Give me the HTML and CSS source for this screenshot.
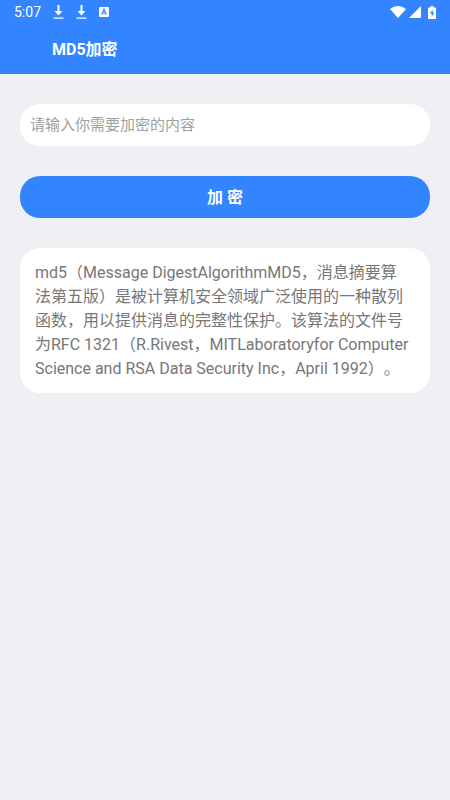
FILE: index.html
```html
<!DOCTYPE html>
<html lang="zh-CN">
<head>
    <meta charset="UTF-8">
    <meta name="viewport" content="width=device-width, initial-scale=1.0">
    <title>MD5加密</title>
    <link rel="stylesheet" href="styles.css">
</head>
<body>
    <header class="header">
        <div class="status-bar">
            <span class="time">5:07</span>
            <div class="status-left">
                <svg class="icon" width="11" height="14" viewBox="0 0 11 14"><path d="M4.500 0h2v6h3l-4 4.500-4-4.500h3zM.5 12.500h10v1.200H.5z"/></svg>
                <svg class="icon" width="11" height="14" viewBox="0 0 11 14"><path d="M4.500 0h2v6h3l-4 4.500-4-4.500h3zM.5 12.500h10v1.200H.5z"/></svg>
                <svg class="icon" width="10" height="10" viewBox="0 0 10 10"><rect width="10" height="10" rx="1"/><path d="M2.700 7.500 5 2.200 7.300 7.500M3.500 6h3" fill="none" stroke="#3285ff" stroke-width="1.200"/></svg>
            </div>
            <div class="status-right">
                <svg class="icon" width="16" height="12" viewBox="0 0 16 12"><path d="M0 3Q8-3 16 3L8 12z"/></svg>
                <svg class="icon" width="12" height="12" viewBox="0 0 12 12"><path d="M12 0v12H0z"/></svg>
                <svg class="icon battery" width="8" height="13" viewBox="0 0 8 13"><path d="M2.500 0h3v1.500H7.500L8 2v10.500l-.5.500h-7L0 12.500V2l.5-.5h2z"/><path d="M4.700 3.500 2 7.500h1.700v3.500L6.200 6.500H4.700z" fill="#3285ff"/></svg>
            </div>
        </div>
        <h1 class="title">MD5加密</h1>
    </header>
    <main class="content">
        <input class="text-input" type="text" id="source" placeholder="请输入你需要加密的内容" aria-label="请输入你需要加密的内容">
        <button class="encrypt-button" type="button">加 密</button>
        <p class="card">md5（Message DigestAlgorithmMD5，消息摘要算法第五版）是被计算机安全领域广泛使用的一种散列函数，用以提供消息的完整性保护。该算法的文件号为RFC 1321（R.Rivest，MITLaboratoryfor Computer Science and RSA Data Security Inc，April 1992）。</p>
    </main>
</body>
</html>
```

FILE: styles.css
```css
* {
    box-sizing: border-box;
}
body {
    margin: 0;
    min-height: 100vh;
    background-color: #efeff4;
    font-family: Roboto, "Noto Sans CJK SC", sans-serif;
}
.header {
    background-color: #3285ff;
    color: white;
}
.status-bar {
    display: flex;
    align-items: center;
    gap: 12px;
    height: 24px;
    padding: 0 14px;
}
.time {
    font-size: 14px;
}
.icon {
    fill: white;
}
.status-left {
    display: flex;
    align-items: center;
    gap: 12px;
}
.status-right {
    display: flex;
    align-items: center;
    gap: 3px;
    margin-left: auto;
}
.battery {
    margin-left: 4px;
}
.title {
    margin: 0;
    padding: 1px 0 0 52px;
    font-size: 16px;
    font-weight: 700;
    line-height: 49px;
}
.content {
    display: flex;
    flex-direction: column;
    gap: 30px;
    padding: 30px 20px;
}
.text-input {
    height: 42px;
    padding: 0 10px;
    border: none;
    border-radius: 20px;
    background-color: white;
    color: #333;
    font-family: inherit;
    font-size: 15px;
}
.text-input::placeholder {
    color: #a0a0a0;
}
.encrypt-button {
    height: 42px;
    padding: 0 0 2px;
    border: none;
    border-radius: 20px;
    background-color: #3285ff;
    color: white;
    font-family: inherit;
    font-size: 16px;
    font-weight: 700;
    cursor: pointer;
}
.card {
    margin: 0;
    padding: 13px 20px 12px 15px;
    border-radius: 20px;
    background-color: white;
    color: #777;
    font-size: 16px;
    line-height: 24px;
    text-spacing-trim: space-all;
}
```
